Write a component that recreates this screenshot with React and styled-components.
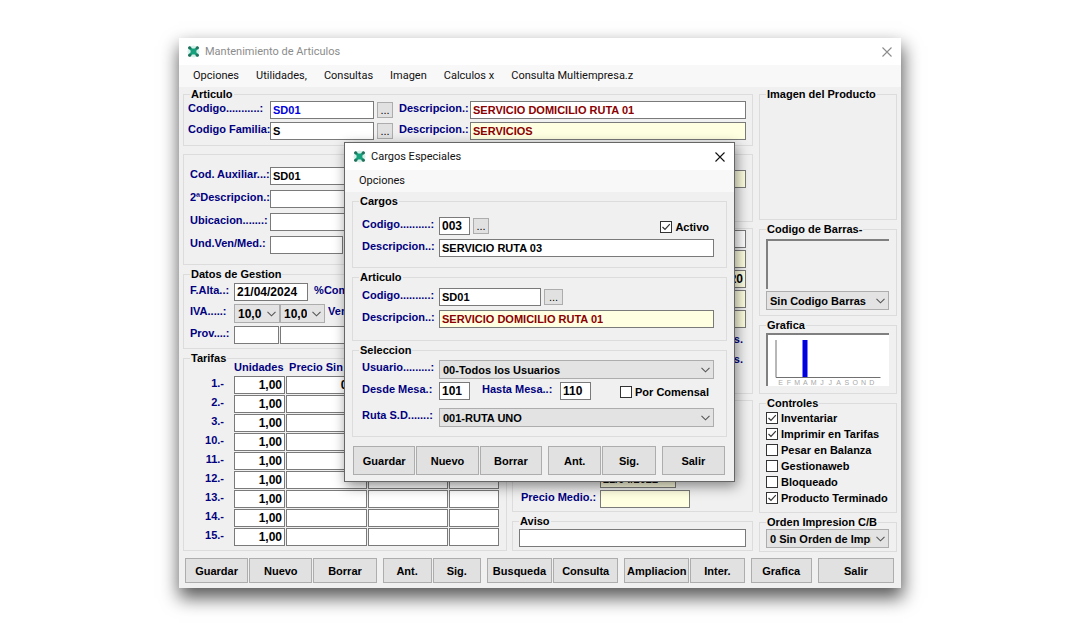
import styled, { createGlobalStyle } from "styled-components"

const GlobalStyle = createGlobalStyle`
    * {
        box-sizing: border-box;
    }

    body {
        margin: 0;
        background-color: #ffffff;
        font-family: "Liberation Sans", Arial, sans-serif;
        font-size: 11px;
        font-weight: bold;
        color: #000000;
    }

    input, select, button {
        font: inherit;
        color: inherit;
        margin: 0;
        border-radius: 0;
    }
`;

const Desktop = styled.div`
    padding: 38px 179px 40px;
`;

const MainWindow = styled.main`
    position: relative;
    background-color: #f0f0f0;
    box-shadow: 1px 9px 17px 1px rgba(0, 0, 0, 0.65);
`;

const DialogWindow = styled.section`
    position: absolute;
    top: 104px;
    left: 165px;
    right: 166px;
    background-color: #f0f0f0;
    border: 1px solid #666666;
    box-shadow: 2px 4px 12px rgba(0, 0, 0, 0.45);
`;

const TitleBar = styled.header`
    height: 27px;
    padding: 0 8px;
    display: flex;
    align-items: center;
    background-color: #ffffff;
`;

const Title = styled.h1`
    flex: 1;
    margin: 0 0 0 5px;
    font-family: Roboto, "Open Sans", sans-serif;
    font-size: 11px;
    font-weight: normal;
    line-height: 14px;
    color: ${({ $inactive }) => ($inactive ? "#8c8c8c" : "#111111")};
`;

const CloseButton = styled.button`
    width: 12px;
    height: 12px;
    padding: 0;
    display: flex;
    border: none;
    background: none;
    color: ${({ $inactive }) => ($inactive ? "#8c8c8c" : "#111111")};
`;

const MenuBar = styled.nav`
    height: 22px;
    padding: 0 14px;
    display: flex;
    align-items: center;
    gap: 17px;
    background-color: #f8f8f8;
`;

const MenuItem = styled.button`
    padding: 0;
    border: none;
    background: none;
    font-family: Roboto, "Open Sans", sans-serif;
    font-size: 11px;
    font-weight: normal;
    line-height: 14px;
    color: #111111;
`;

const WindowBody = styled.div`
    padding: 4px 4px 0;
    display: grid;
    grid-template-columns: 1fr 138px;
    gap: 6px;
`;

const MainColumn = styled.div`
    display: flex;
    flex-direction: column;
    gap: 8px;
    min-width: 0;
`;

const SplitColumns = styled.div`
    display: grid;
    grid-template-columns: 324px 1fr;
    gap: 5px;
`;

const Stack = styled.div`
    display: flex;
    flex-direction: column;
    gap: 6px;
    min-width: 0;
`;

const DialogBody = styled.div`
    padding: 3px 7px 6px;
`;

const Group = styled.fieldset`
    min-width: 0;
    min-height: ${({ $height }) => ($height ? `${$height}px` : "0")};
    margin: ${({ $titled }) => ($titled ? "-3px 0 0" : "0")};
    padding: ${({ $pad }) => $pad || "0 6px"};
    border: 1px solid #dcdcdc;
`;

const DialogGroup = styled(Group)`
    margin: 0;

    & + & {
        margin-top: 3px;
    }
`;

const Legend = styled.legend`
    padding: 0 1px;
    line-height: 12px;
`;

const ArticleLegend = styled(Legend)`
    margin-left: 2px;
`;

const DialogLegend = styled(Legend)`
    margin-left: -3px;
`;

const Rows = styled.div`
    display: flex;
    flex-direction: column;
    gap: ${({ $gap }) => $gap}px;
`;

const UnevenRows = styled.div`
    display: grid;
    grid-template-rows: 22px 26px 19px;
`;

const Row = styled.div`
    display: flex;
    align-items: flex-start;
`;

const Label = styled.label`
    flex: none;
    width: ${({ $width }) => ($width ? `${$width}px` : "auto")};
    line-height: 15px;
    white-space: nowrap;
    color: #00007f;
`;

const MesaLabel = styled(Label)`
    padding-left: 12px;
`;

const UnitText = styled.div`
    padding-right: 3px;
    line-height: 18px;
    text-align: right;
    color: #00007f;
`;

const Field = styled.input`
    display: block;
    flex: ${({ $width }) => ($width ? "none" : "1")};
    width: ${({ $width }) => ($width ? `${$width}px` : "100%")};
    min-width: 0;
    height: 18px;
    min-height: 18px;
    padding: 0 2px;
    border: 1px solid #7a7a7a;
    outline: none;
    font-size: ${({ $large }) => ($large ? "12px" : "11px")};
    text-align: ${({ $right }) => ($right ? "right" : "left")};
    background-color: ${({ $yellow }) => ($yellow ? "#ffffe1" : "#ffffff")};
    color: ${({ $color }) => $color || "#000000"};
`;

const FieldSpace = styled.span`
    width: 1px;
`;

const LookupButton = styled.button`
    flex: none;
    width: ${({ $wide }) => ($wide ? "19px" : "16px")};
    height: 16px;
    margin: 1px 6px 0 3px;
    padding: 0;
    border: 1px solid #adadad;
    background-color: #e1e1e1;
    font-weight: normal;
    line-height: 12px;
`;

const SelectBox = styled.div`
    display: grid;
    flex: ${({ $width }) => ($width ? "none" : "1")};
    width: ${({ $width }) => ($width ? `${$width}px` : "auto")};
    min-width: 0;
    align-items: center;
`;

const SelectInput = styled.select`
    grid-area: 1 / 1;
    appearance: none;
    width: 100%;
    min-width: 0;
    height: 19px;
    padding: 0 17px 0 3px;
    border: 1px solid #adadad;
    background-color: #e3e3e3;
    font-size: ${({ $large }) => ($large ? "12px" : "11px")};
    overflow: hidden;
`;

const Arrow = styled.svg`
    grid-area: 1 / 1;
    justify-self: end;
    width: 9px;
    height: 6px;
    margin-right: 4px;
    pointer-events: none;
`;

const CheckLabel = styled.label`
    display: flex;
    align-items: center;
    gap: 3px;
    height: 16px;
    white-space: nowrap;
    margin: ${({ $push }) => ($push ? "2px 5px 0 auto" : "0")};
`;

const CheckBox = styled.span`
    display: grid;
    width: 12px;
    height: 12px;
`;

const CheckInput = styled.input`
    grid-area: 1 / 1;
    appearance: none;
    width: 12px;
    height: 12px;
    border: 1px solid #333333;
    background-color: #ffffff;

    & + svg {
        visibility: hidden;
    }

    &:checked + svg {
        visibility: visible;
    }
`;

const CheckMark = styled.svg`
    grid-area: 1 / 1;
    pointer-events: none;
`;

const RateTable = styled.table`
    width: 308px;
    margin-top: -3px;
    border-spacing: 0;
    table-layout: fixed;

    th, td {
        padding: 0 1px 0 0;
        vertical-align: top;
    }

    thead th {
        height: 15px;
        line-height: 12px;
        text-align: left;
        white-space: nowrap;
        color: #00007f;
    }

    tbody th {
        height: 19px;
        padding-right: 10px;
        line-height: 14px;
        text-align: right;
        color: #00007f;
    }
`;

const SunkenPanel = styled.div`
    height: ${({ $height }) => $height}px;
    border-top: 2px solid #808080;
    border-left: 2px solid #808080;
    background-color: ${({ $white }) => ($white ? "#ffffff" : "#f0f0f0")};

    svg {
        display: block;
    }
`;

const ButtonBar = styled.footer`
    display: flex;
    gap: 6px;
    padding: ${({ $dialog }) => ($dialog ? "9px 2px 0 1px" : "6px 7px 5px 6px")};
`;

const ButtonSet = styled.div`
    display: flex;
    flex: ${({ $grow }) => $grow} 1 0;
    gap: 1px;
`;

const PushButton = styled.button`
    flex: ${({ $grow }) => $grow || 1} 1 0;
    min-width: 0;
    height: ${({ $tall }) => ($tall ? "29px" : "25px")};
    padding: 0;
    border: 1px solid #adadad;
    background-color: #e1e1e1;
`;

const BLUE = "#0000e0";
const DARK_RED = "#8b0000";

const rates = ["1.-", "2.-", "3.-", "10.-", "11.-", "12.-", "13.-", "14.-", "15.-"];
const months = ["E", "F", "M", "A", "M", "J", "J", "A", "S", "O", "N", "D"];

const controls = [
    { text: "Inventariar", checked: true },
    { text: "Imprimir en Tarifas", checked: true },
    { text: "Pesar en Balanza", checked: false },
    { text: "Gestionaweb", checked: false },
    { text: "Bloqueado", checked: false },
    { text: "Producto Terminado", checked: true },
];

const mainButtons = [
    { grow: 191, items: [["Guardar", 63], ["Nuevo", 63], ["Borrar", 63]] },
    { grow: 98, items: [["Ant.", 49], ["Sig.", 48]] },
    { grow: 131, items: [["Busqueda", 65], ["Consulta", 65]] },
    { grow: 120, items: [["Ampliacion", 65], ["Inter.", 54]] },
    { grow: 61, items: [["Grafica", 61]] },
    { grow: 76, items: [["Salir", 76]] },
];

const dialogButtons = [
    { grow: 188, items: [["Guardar", 62], ["Nuevo", 62], ["Borrar", 62]] },
    { grow: 107, items: [["Ant.", 53], ["Sig.", 53]] },
    { grow: 63, items: [["Salir", 63]] },
];

function AppIcon() {
    return (
        <svg width="13" height="13" viewBox="0 0 13 13" aria-hidden="true">
            <circle cx="6.5" cy="6.5" r="6" fill="#d8f0ea" />
            <path d="M2.6 2.8 L10.4 10.2 M10.4 2.8 L2.6 10.2" stroke="#17a07c" strokeWidth="2.6" strokeLinecap="round" />
            <circle cx="6.5" cy="6.5" r="2.9" fill="#17a07c" />
            <circle cx="2.6" cy="2.8" r="1.5" fill="#256f5c" />
            <circle cx="10.4" cy="2.8" r="1.5" fill="#256f5c" />
            <circle cx="2.6" cy="10.2" r="1.5" fill="#256f5c" />
            <circle cx="10.4" cy="10.2" r="1.5" fill="#256f5c" />
        </svg>
    )
}

function Close({ inactive }) {
    return (
        <CloseButton $inactive={inactive} aria-label="Cerrar">
            <svg width="12" height="12" viewBox="0 0 12 12">
                <path d="M1.5 1.5 L10.5 10.5 M10.5 1.5 L1.5 10.5" stroke="currentColor" strokeWidth="1.1" fill="none" />
            </svg>
        </CloseButton>
    )
}

function Select({ id, value, width, large, label }) {
    return (
        <SelectBox $width={width}>
            <SelectInput id={id} aria-label={label} $large={large} defaultValue={value}>
                <option>{value}</option>
            </SelectInput>
            <Arrow viewBox="0 0 9 6" aria-hidden="true">
                <path d="M0.5 0.8 L4.5 4.8 L8.5 0.8" fill="none" stroke="#555555" strokeWidth="1.1" />
            </Arrow>
        </SelectBox>
    )
}

function Check({ text, checked, push }) {
    return (
        <CheckLabel $push={push}>
            <CheckBox>
                <CheckInput type="checkbox" defaultChecked={checked} />
                <CheckMark width="12" height="12" viewBox="0 0 12 12">
                    <path d="M2.5 6 L5 8.5 L9.8 3.2" fill="none" stroke="#333333" strokeWidth="1.2" />
                </CheckMark>
            </CheckBox>
            {text}
        </CheckLabel>
    )
}

function Buttons({ sets, dialog }) {
    return (
        <ButtonBar $dialog={dialog}>
            {sets.map((set) => (
                <ButtonSet key={set.items[0][0]} $grow={set.grow}>
                    {set.items.map(([text, grow]) => (
                        <PushButton key={text} $grow={grow} $tall={dialog}>{text}</PushButton>
                    ))}
                </ButtonSet>
            ))}
        </ButtonBar>
    )
}

function ArticleGroup() {
    return (
        <Group $titled $pad="1px 6px 5px 4px">
            <ArticleLegend>Articulo</ArticleLegend>
            <Rows $gap={3}>
                <Row>
                    <Label htmlFor="codigo" $width={82}>Codigo...........:</Label>
                    <Field id="codigo" $width={104} $color={BLUE} defaultValue="SD01" />
                    <LookupButton>...</LookupButton>
                    <Label htmlFor="descripcion" $width={71}>Descripcion.:</Label>
                    <Field id="descripcion" $color={DARK_RED} defaultValue="SERVICIO DOMICILIO RUTA 01" />
                </Row>
                <Row>
                    <Label htmlFor="familia" $width={82}>Codigo Familia:</Label>
                    <Field id="familia" $width={104} defaultValue="S" />
                    <LookupButton>...</LookupButton>
                    <Label htmlFor="familia-desc" $width={71}>Descripcion.:</Label>
                    <Field id="familia-desc" $yellow $color={DARK_RED} defaultValue="SERVICIOS" />
                </Row>
            </Rows>
        </Group>
    )
}

function AuxiliarGroup() {
    return (
        <Group $pad="12px 6px 10px">
            <Rows $gap={5}>
                <Row>
                    <Label htmlFor="auxiliar" $width={80}>Cod. Auxiliar...:</Label>
                    <Field id="auxiliar" defaultValue="SD01" />
                </Row>
                <Row>
                    <Label htmlFor="segunda" $width={80}>2ªDescripcion.:</Label>
                    <Field id="segunda" />
                </Row>
                <Row>
                    <Label htmlFor="ubicacion" $width={80}>Ubicacion.......:</Label>
                    <Field id="ubicacion" />
                </Row>
                <Row>
                    <Label htmlFor="und" $width={80}>Und.Ven/Med.:</Label>
                    <Field id="und" $width={73} />
                </Row>
            </Rows>
        </Group>
    )
}

function ManagementGroup() {
    return (
        <Group $titled $pad="3px 6px 4px">
            <Legend>Datos de Gestion</Legend>
            <Rows $gap={3}>
                <Row>
                    <Label htmlFor="alta" $width={44}>F.Alta..:</Label>
                    <Field id="alta" $large $width={74} defaultValue="21/04/2024" />
                    <Label as="span">&nbsp; %Comi</Label>
                </Row>
                <Row>
                    <Label htmlFor="iva" $width={44}>IVA.....:</Label>
                    <Select id="iva" large width={46} value="10,0" />
                    <Select label="IVA 2" large width={45} value="10,0" />
                    <Label as="span">&nbsp;Ven</Label>
                </Row>
                <Row>
                    <Label htmlFor="prov" $width={44}>Prov....:</Label>
                    <Field id="prov" $width={45} />
                    <FieldSpace />
                    <Field aria-label="Proveedor" />
                </Row>
            </Rows>
        </Group>
    )
}

function RatesGroup() {
    return (
        <Group $titled $pad="0 6px 3px">
            <Legend>Tarifas</Legend>
            <RateTable>
                <colgroup>
                    <col width="44" />
                    <col width="52" />
                    <col width="82" />
                    <col width="81" />
                    <col width="51" />
                </colgroup>
                <thead>
                    <tr>
                        <th></th>
                        <th>Unidades</th>
                        <th>&nbsp;Precio Sin</th>
                        <th></th>
                        <th></th>
                    </tr>
                </thead>
                <tbody>
                    {rates.map((rate, index) => (
                        <tr key={rate}>
                            <th scope="row">{rate}</th>
                            <td><Field aria-label={`Unidades ${rate}`} $large $right defaultValue="1,00" /></td>
                            <td><Field aria-label={`Precio ${rate}`} $large $right defaultValue={index === 0 ? "0,00" : ""} /></td>
                            <td><Field aria-label={`Importe ${rate}`} /></td>
                            <td><Field aria-label={`Margen ${rate}`} /></td>
                        </tr>
                    ))}
                </tbody>
            </RateTable>
        </Group>
    )
}

function StockColumn() {
    return (
        <Stack>
            <Group $height={68} $pad="15px 6px 0">
                <Field aria-label="Auxiliar" $yellow />
            </Group>
            <Group $height={166} $pad="1px 6px 0">
                <Rows $gap={2}>
                    <Field aria-label="Existencias" />
                    <Field aria-label="Entradas" $yellow />
                    <Field aria-label="Precio" $yellow $large $right defaultValue="0,20" />
                    <Field aria-label="Salidas" $yellow />
                    <Field aria-label="Pendiente" $yellow />
                    <UnitText>Uds.</UnitText>
                    <UnitText>Uds.</UnitText>
                </Rows>
            </Group>
            <Group $height={112} $pad="69px 6px 3px 8px">
                <Rows $gap={2}>
                    <Row>
                        <Label htmlFor="ultima" $width={79}></Label>
                        <Field id="ultima" $yellow $width={76} defaultValue="21/04/2022" />
                    </Row>
                    <Row>
                        <Label htmlFor="medio" $width={79}>Precio Medio.:</Label>
                        <Field id="medio" $yellow $width={90} />
                    </Row>
                </Rows>
            </Group>
            <Group $titled $pad="2px 6px 3px">
                <Legend>Aviso</Legend>
                <Field aria-label="Aviso" />
            </Group>
        </Stack>
    )
}

function SideColumn() {
    return (
        <Stack>
            <Group $titled $height={132}>
                <Legend>Imagen del Producto</Legend>
            </Group>
            <Group $titled $pad="4px 7px 5px 6px">
                <Legend>Codigo de Barras-</Legend>
                <Rows $gap={2}>
                    <SunkenPanel $height={50} />
                    <Select label="Codigo de Barras" value="Sin Codigo Barras" />
                </Rows>
            </Group>
            <Group $titled $pad="2px 7px 7px 6px">
                <Legend>Grafica</Legend>
                <SunkenPanel $height={53} $white>
                    <svg width="100%" height="51" viewBox="0 0 120 51" role="img" aria-label="Grafica">
                        <path d="M7.5 5 V42.5 H112" fill="none" stroke="#707070" />
                        <rect x="34" y="5" width="5" height="37" fill="#0000e0" />
                        {months.map((month, index) => (
                            <text
                                key={index}
                                x={12 + index * 8.3}
                                y="50"
                                fontSize="7"
                                fontWeight="normal"
                                textAnchor="middle"
                                fill="#a8a8a8"
                            >
                                {month}
                            </text>
                        ))}
                    </svg>
                </SunkenPanel>
            </Group>
            <Group $titled $pad="1px 6px 6px">
                <Legend>Controles</Legend>
                {controls.map((control) => (
                    <Check key={control.text} text={control.text} checked={control.checked} />
                ))}
            </Group>
            <Group $titled $pad="1px 7px 3px 6px">
                <Legend>Orden Impresion C/B</Legend>
                <Select label="Orden Impresion C/B" value="0 Sin Orden de Impresion" />
            </Group>
        </Stack>
    )
}

function ChargesDialog() {
    return (
        <DialogWindow role="dialog" aria-label="Cargos Especiales">
            <TitleBar>
                <AppIcon />
                <Title as="h2">Cargos Especiales</Title>
                <Close />
            </TitleBar>
            <MenuBar>
                <MenuItem>Opciones</MenuItem>
            </MenuBar>
            <DialogBody>
                <DialogGroup $pad="10px 12px 10px 9px">
                    <DialogLegend>Cargos</DialogLegend>
                    <Rows $gap={4}>
                        <Row>
                            <Label htmlFor="cargo" $width={77}>Codigo..........:</Label>
                            <Field id="cargo" $large $width={31} defaultValue="003" />
                            <LookupButton>...</LookupButton>
                            <Check text="Activo" checked push />
                        </Row>
                        <Row>
                            <Label htmlFor="cargo-desc" $width={77}>Descripcion..:</Label>
                            <Field id="cargo-desc" defaultValue="SERVICIO RUTA 03" />
                        </Row>
                    </Rows>
                </DialogGroup>
                <DialogGroup $pad="5px 12px 12px 9px">
                    <DialogLegend>Articulo</DialogLegend>
                    <Rows $gap={4}>
                        <Row>
                            <Label htmlFor="articulo" $width={77}>Codigo..........:</Label>
                            <Field id="articulo" $width={102} defaultValue="SD01" />
                            <LookupButton $wide>...</LookupButton>
                        </Row>
                        <Row>
                            <Label htmlFor="articulo-desc" $width={77}>Descripcion..:</Label>
                            <Field id="articulo-desc" $yellow $color={DARK_RED} defaultValue="SERVICIO DOMICILIO RUTA 01" />
                        </Row>
                    </Rows>
                </DialogGroup>
                <DialogGroup $pad="4px 12px 9px 9px">
                    <DialogLegend>Seleccion</DialogLegend>
                    <UnevenRows>
                        <Row>
                            <Label htmlFor="usuario" $width={77}>Usuario.........:</Label>
                            <Select id="usuario" value="00-Todos los Usuarios" />
                        </Row>
                        <Row>
                            <Label htmlFor="desde" $width={77}>Desde Mesa.:</Label>
                            <Field id="desde" $large $width={31} defaultValue="101" />
                            <MesaLabel htmlFor="hasta" $width={90}>Hasta Mesa..:</MesaLabel>
                            <Field id="hasta" $large $width={31} defaultValue="110" />
                            <Check text="Por Comensal" push />
                        </Row>
                        <Row>
                            <Label htmlFor="ruta" $width={77}>Ruta S.D.......:</Label>
                            <Select id="ruta" value="001-RUTA UNO" />
                        </Row>
                    </UnevenRows>
                </DialogGroup>
                <Buttons sets={dialogButtons} dialog />
            </DialogBody>
        </DialogWindow>
    )
}

export default function App() {
    return (
        <>
        <GlobalStyle />
        <Desktop>
            <MainWindow>
                <TitleBar>
                    <AppIcon />
                    <Title $inactive>Mantenimiento de Articulos</Title>
                    <Close inactive />
                </TitleBar>
                <MenuBar>
                    <MenuItem>Opciones</MenuItem>
                    <MenuItem>Utilidades,</MenuItem>
                    <MenuItem>Consultas</MenuItem>
                    <MenuItem>Imagen</MenuItem>
                    <MenuItem>Calculos x</MenuItem>
                    <MenuItem>Consulta Multiempresa.z</MenuItem>
                </MenuBar>
                <WindowBody>
                    <MainColumn>
                        <ArticleGroup />
                        <SplitColumns>
                            <Stack>
                                <AuxiliarGroup />
                                <ManagementGroup />
                                <RatesGroup />
                            </Stack>
                            <StockColumn />
                        </SplitColumns>
                    </MainColumn>
                    <SideColumn />
                </WindowBody>
                <Buttons sets={mainButtons} />
                <ChargesDialog />
            </MainWindow>
        </Desktop>
        </>
    )
}
